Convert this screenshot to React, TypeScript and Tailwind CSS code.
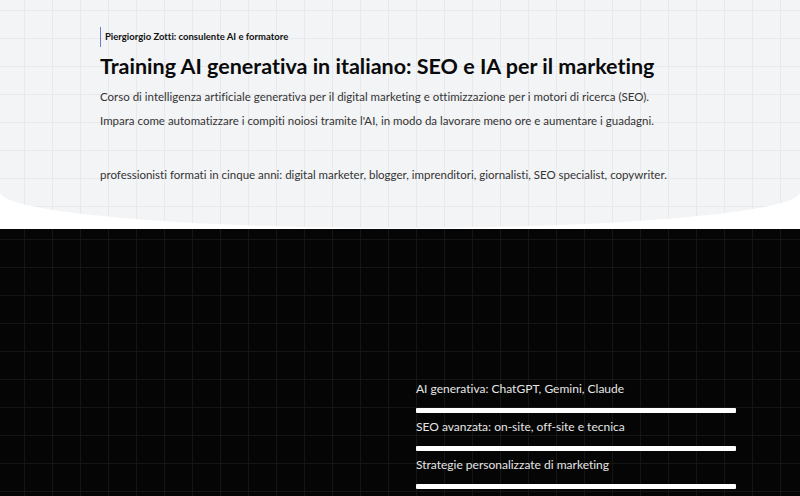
export default function App() {
  const items = [
    'AI generativa: ChatGPT, Gemini, Claude',
    'SEO avanzata: on-site, off-site e tecnica',
    'Strategie personalizzate di marketing',
  ];

  return (
    <div className="w-[800px] h-[496px] overflow-hidden bg-white font-['Lato',sans-serif] [font-variant-ligatures:none]">
      {/* hero chiaro con bordo curvo */}
      <section className="h-[228px] bg-[#f3f4f6] bg-[linear-gradient(to_right,#e8e9ed_1px,transparent_1px),linear-gradient(to_bottom,#e8e9ed_1px,transparent_1px)] bg-[size:28px_28px] bg-[position:24px_10px] rounded-b-[400px_36px] pl-[100px] pt-[27px]">
        <div className="border-l-[1.5px] border-[#6b7bd6] pl-[4px] h-[20px] flex items-center">
          <span className="text-[9.5px] font-bold text-[#111]">
            Piergiorgio Zotti: consulente AI e formatore
          </span>
        </div>
        <h1 className="mt-[6px] text-[21.5px] leading-[26px] font-bold text-[#0a0a0a]">
          Training AI generativa in italiano: SEO e IA per il marketing
        </h1>
        <p className="mt-[9px] text-[11.5px] leading-[18px] text-[#333]">
          Corso di intelligenza artificiale generativa per il digital marketing e ottimizzazione per i motori di ricerca (SEO).
        </p>
        <p className="mt-[6px] text-[11.5px] leading-[18px] text-[#333]">
          Impara come automatizzare i compiti noiosi tramite l'AI, in modo da lavorare meno ore e aumentare i guadagni.
        </p>
        <p className="mt-[36px] text-[11.5px] leading-[18px] text-[#333]">
          professionisti formati in cinque anni: digital marketer, blogger, imprenditori, giornalisti, SEO specialist, copywriter.
        </p>
      </section>

      {/* sezione scura */}
      <section className="mt-px h-[267px] bg-[#050505] bg-[linear-gradient(to_right,#151515_1px,transparent_1px),linear-gradient(to_bottom,#151515_1px,transparent_1px)] bg-[size:28px_28px] bg-[position:24px_10px] pl-[416px] pt-[153px]">
        <ul className="w-[320px] flex flex-col gap-[7px]">
          {items.map((t) => (
            <li key={t} className="flex flex-col gap-[13px]">
              <span className="text-[12px] leading-[13px] text-[#e5e5e5]">{t}</span>
              <div className="h-[5px] bg-white rounded-[1px]" />
            </li>
          ))}
        </ul>
      </section>
    </div>
  );
}
